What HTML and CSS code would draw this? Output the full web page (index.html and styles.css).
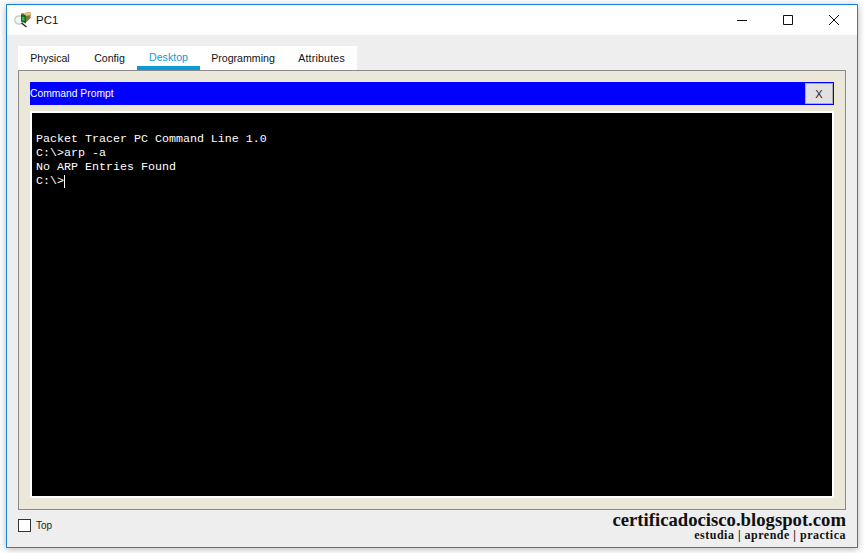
FILE: index.html
```html
<!DOCTYPE html>
<html lang="en">
<head>
<meta charset="utf-8">
<title>PC1</title>
<link rel="stylesheet" href="styles.css">
</head>
<body>
<div class="window">
  <header class="titlebar">
    <svg class="app-icon" width="20" height="20" viewBox="0 0 20 20">
      <circle cx="5" cy="10" r="4.200" fill="#f2f3f3" stroke="#c4c6c6" stroke-width="1.200"/>
      <path d="M7.500 13l5 4" stroke="#222" stroke-width="1.400"/>
      <path d="M7 3.500l9.500-1.500v6l-4.500 4.500z" fill="#8a7336"/>
      <path d="M9 3.200l7.500-1.200v3l-4.500 1z" fill="#dcc67e"/>
      <path d="M7 4l5 1.500v8l-5-2z" fill="#0f6a2a"/>
      <path d="M8 6.500l2.500.7v3.800l-2.500-.8z" fill="#35bd40"/>
    </svg>
    <span class="title">PC1</span>
    <div class="controls">
      <svg class="ctl" width="46" height="30" viewBox="0 0 46 30"><path d="M18 15.500h10" stroke="#111" fill="none"/></svg>
      <svg class="ctl" width="46" height="30" viewBox="0 0 46 30"><path d="M18.500 10.500h9v9h-9z" stroke="#111" fill="none"/></svg>
      <svg class="ctl" width="46" height="30" viewBox="0 0 46 30"><path d="M18 10l10 10M28 10l-10 10" stroke="#111" fill="none"/></svg>
    </div>
  </header>
  <main class="body">
    <nav class="tabs">
      <span class="tab tab-physical">Physical</span>
      <span class="tab tab-config">Config</span>
      <span class="tab tab-desktop active">Desktop</span>
      <span class="tab tab-programming">Programming</span>
      <span class="tab tab-attributes">Attributes</span>
    </nav>
    <section class="panel">
      <div class="cmd-bar">
        <span class="cmd-title">Command Prompt</span>
        <span class="cmd-close">X</span>
      </div>
      <div class="terminal">
        <div class="line">Packet Tracer PC Command Line 1.0</div>
        <div class="line">C:\&gt;arp -a</div>
        <div class="line">No ARP Entries Found</div>
        <div class="line">C:\&gt;<span class="caret"></span></div>
      </div>
    </section>
    <footer class="bottom">
      <label class="top-check"><span class="box"></span><span>Top</span></label>
      <div class="brand">
        <div class="brand-main">certificadocisco.blogspot.com</div>
        <div class="brand-sub">estudia | aprende | practica</div>
      </div>
    </footer>
  </main>
</div>
</body>
</html>
```
FILE: styles.css
```css
* { box-sizing: border-box; }
html, body { margin: 0; height: 100%; }
body {
  width: 865px;
  height: 553px;
  background: #fff;
  padding: 4px 7px 5px 6px;
  font-family: "Liberation Sans", Arial, sans-serif;
  overflow: hidden;
}
.window {
  height: 544px;
  border: 1px solid #1883d7;
  box-shadow: 0 1px 7px rgba(0,0,0,.3);
  background: #eee;
  display: flex;
  flex-direction: column;
}
.titlebar {
  height: 30px;
  background: #fff;
  display: flex;
  align-items: center;
  padding-left: 7px;
  flex: none;
}
.app-icon { margin-right: 2px; margin-top: -1px; }
.title { font-size: 11.500px; color: #111; }
.controls { margin-left: auto; display: flex; }
.ctl { display: block; }
.body {
  flex: 1;
  display: flex;
  flex-direction: column;
  padding: 11px 11px 0 11px;
  min-height: 0;
}
.tabs {
  display: flex;
  width: 339px;
  height: 24px;
  background: #fff;
  font-size: 10.600px;
  color: #111;
  flex: none;
}
.tab {
  display: flex;
  align-items: center;
  justify-content: center;
  height: 24px;
  padding-bottom: 1px;
}
.tab-physical { width: 64px; }
.tab-config { width: 55px; }
.tab-desktop { width: 63px; }
.tab-programming { width: 86px; }
.tab-attributes { width: 71px; letter-spacing: .2px; }
.active { color: #0d9bd8; border-bottom: 4px solid #0c9ad6; padding-bottom: 0; padding-top: 1px; }
.panel {
  height: 440px;
  border: 1px solid #8a8a8a;
  background: #ebe8da;
  padding: 11px;
  flex: none;
}
.cmd-bar {
  height: 23px;
  background: #0000ff;
  display: flex;
  align-items: center;
  justify-content: space-between;
  padding-right: 1px;
}
.cmd-title { color: #fff; font-size: 10.300px; margin-top: -1px; }
.cmd-close {
  width: 28px;
  height: 21px;
  background: #e1e1e1;
  border: 1px solid #adadad;
  color: #222;
  font-size: 11px;
  display: flex;
  align-items: center;
  justify-content: center;
}
.terminal {
  margin-top: 6px;
  height: 387px;
  background: #000;
  border: 2px solid #fff;
  padding: 19px 0 0 4px;
  color: #fff;
  font-family: "Liberation Mono", "Courier New", monospace;
  font-size: 11.670px;
  line-height: 14px;
}
.line { height: 14px; white-space: pre; display: flex; align-items: center; }
.caret { display: inline-block; width: 1px; height: 13px; background: #fff; }
.bottom {
  flex: 1;
  display: flex;
  justify-content: space-between;
  align-items: flex-start;
  min-height: 0;
}
.top-check {
  display: flex;
  align-items: center;
  gap: 5px;
  font-size: 10px;
  color: #222;
  margin-top: 9px;
}
.box { width: 13px; height: 13px; background: #fff; border: 1px solid #333; }
.brand {
  text-align: right;
  font-family: "Liberation Serif", "Times New Roman", serif;
  font-weight: bold;
  color: #111;
}
.brand-main { font-size: 18.700px; line-height: 19px; }
.brand-sub { font-size: 12px; line-height: 13px; letter-spacing: .5px; }
```
